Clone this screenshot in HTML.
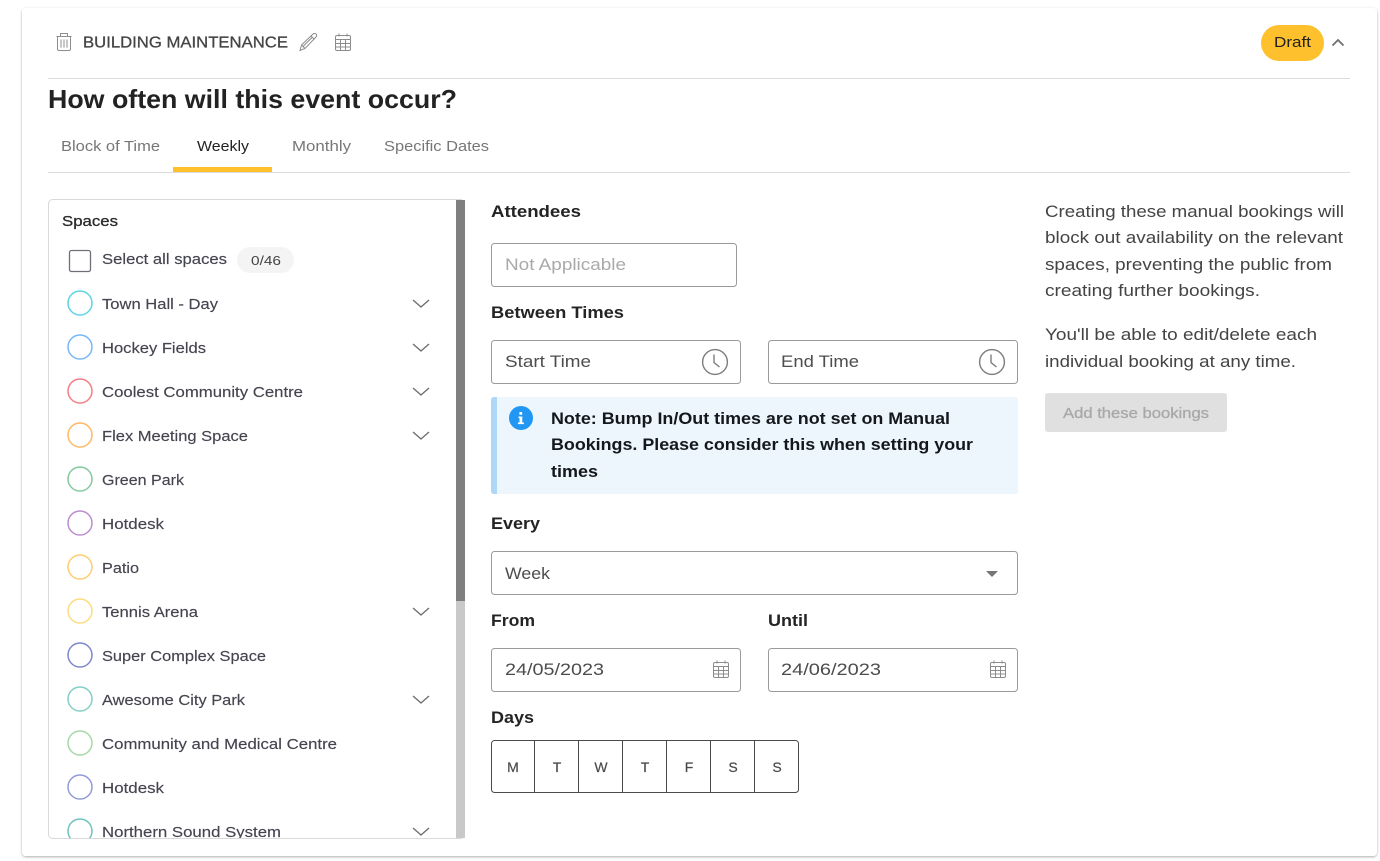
<!DOCTYPE html>
<html><head><meta charset="utf-8"><title>Building Maintenance</title>
<style>
html,body{margin:0;padding:0;width:1380px;height:861px;overflow:hidden;background:#fff}
svg{display:block;position:absolute;left:0;top:0}
text{font-family:"Liberation Sans",sans-serif;white-space:pre}
.m{stroke-width:.3px;paint-order:stroke}
.item{font-size:14.5px;fill:#454550;stroke:#454550;stroke-width:.15px}
.lab{font-size:16.8px;font-weight:700;fill:#242424}
.inp{font-size:17px;fill:#4d4d4d}
.body{font-size:16.5px;fill:#444}
.day{font-size:14px;fill:#4a4a4a;text-anchor:middle;stroke:#4a4a4a;stroke-width:.2px}
.tab{font-size:15px;fill:#777}
.box{fill:#fff;stroke:#9a9a9a;stroke-width:1}
.ic{fill:none;stroke:#8c8c8c;stroke-width:1}
.chev{fill:none;stroke:#6f6f6f;stroke-width:1.4}
.c{fill:none;stroke-width:1.5}
</style></head><body>
<svg width="1380" height="861" viewBox="0 0 1380 861" xmlns="http://www.w3.org/2000/svg">
<defs>
<filter id="s" x="-3%" y="-3%" width="106%" height="106%"><feDropShadow dx="0" dy="1" stdDeviation="1.2" flood-color="#000" flood-opacity=".32"/></filter>
<clipPath id="p"><rect x="49" y="200" width="416" height="638"/></clipPath>
<g id="cal" class="ic">
<rect x="0.5" y="2.5" width="15" height="15" rx="1.5"/><path d="M.5 6.5h15M.5 10.5h15M.5 14h15M5.5 6.5v11M10.5 6.5v11M4 .5v3M12 .5v3"/>
</g>
<g id="clk"><circle cx="0" cy="0" r="12.4" fill="none" stroke="#7d7d7d" stroke-width="1.4"/><path d="M-1-7.5V0.5L4.5 5" fill="none" stroke="#7d7d7d" stroke-width="1.4"/></g>
<path id="dn" d="M0 0L8 7L16 0" class="chev"/>
</defs>

<rect x="22" y="8" width="1355" height="848" rx="4" fill="#fff" filter="url(#s)"/>

<!-- header -->
<g class="ic">
<path d="M56.5 36.5h15M60.5 36V33.5h7V36M57.5 36.5V49a1.5 1.5 0 0 0 1.5 1.5h10a1.5 1.5 0 0 0 1.5-1.5V36.5M61 39.5v8M64 39.5v8M67 39.5v8"/>
<path d="M300 50.5L301.5 45L313 34a2 2 0 0 1 3 0a2 2 0 0 1 0 3L305 48.5ZM301.5 45L305 48.5M311 36L314.5 39.5M303 46.5L312.5 37"/>
</g>
<use href="#cal" x="335" y="33"/>
<text x="83" y="47.5" font-size="16" textLength="205" lengthAdjust="spacingAndGlyphs" fill="#444" stroke="#444" class="m">BUILDING MAINTENANCE</text>
<rect x="1261" y="25" width="63" height="36" rx="18" fill="#fec02d"/>
<text x="1274" y="47" font-size="14.5" textLength="37" lengthAdjust="spacingAndGlyphs" fill="#222">Draft</text>
<path d="M1332.5 45.5L1338 40L1343.5 45.5" fill="none" stroke="#6f6f6f" stroke-width="1.8"/>
<rect x="48" y="78" width="1302" height="1" fill="#dcdcdc"/>

<text x="48" y="108" font-size="26" font-weight="700" textLength="409" lengthAdjust="spacingAndGlyphs" fill="#222">How often will this event occur?</text>

<!-- tabs -->
<text class="tab" x="61" y="151" textLength="99" lengthAdjust="spacingAndGlyphs">Block of Time</text>
<text class="tab" x="197" y="151" textLength="52" lengthAdjust="spacingAndGlyphs" style="fill:#222">Weekly</text>
<text class="tab" x="292" y="151" textLength="59" lengthAdjust="spacingAndGlyphs">Monthly</text>
<text class="tab" x="384" y="151" textLength="105" lengthAdjust="spacingAndGlyphs">Specific Dates</text>
<rect x="48" y="172" width="1302" height="1" fill="#dcdcdc"/>
<rect x="173" y="167" width="99" height="5" fill="#fec02d"/>

<!-- spaces panel -->
<rect x="48.5" y="199.5" width="416" height="639" rx="4" fill="#fff" stroke="#d9d9d9"/>
<rect x="456" y="200" width="9" height="638" fill="#c9c9c9"/>
<rect x="456" y="200" width="9" height="401" fill="#7f7f7f"/>
<text x="62" y="226" font-size="15" textLength="56" lengthAdjust="spacingAndGlyphs" fill="#2a2a2a" stroke="#2a2a2a" class="m">Spaces</text>
<rect x="69.5" y="250.5" width="21" height="21" rx="2" fill="#fff" stroke="#6f6f7a" stroke-width="1.3"/>
<text class="item" x="102" y="264" textLength="125" lengthAdjust="spacingAndGlyphs">Select all spaces</text>
<rect x="237" y="247" width="57" height="26" rx="13" fill="#f4f4f4"/>
<text x="251" y="265" font-size="13" textLength="30" lengthAdjust="spacingAndGlyphs" fill="#444">0/46</text>

<g clip-path="url(#p)">
<circle class="c" cx="80" cy="303" r="12" stroke="#5ed4e4"/><text class="item" x="102" y="309" textLength="116" lengthAdjust="spacingAndGlyphs">Town Hall - Day</text><use href="#dn" x="413" y="300"/>
<circle class="c" cx="80" cy="347" r="12" stroke="#78b8f8"/><text class="item" x="102" y="353" textLength="104" lengthAdjust="spacingAndGlyphs">Hockey Fields</text><use href="#dn" x="413" y="344"/>
<circle class="c" cx="80" cy="391" r="12" stroke="#f57f85"/><text class="item" x="102" y="397" textLength="201" lengthAdjust="spacingAndGlyphs">Coolest Community Centre</text><use href="#dn" x="413" y="388"/>
<circle class="c" cx="80" cy="435" r="12" stroke="#ffb866"/><text class="item" x="102" y="441" textLength="146" lengthAdjust="spacingAndGlyphs">Flex Meeting Space</text><use href="#dn" x="413" y="432"/>
<circle class="c" cx="80" cy="479" r="12" stroke="#85c9a0"/><text class="item" x="102" y="485" textLength="82" lengthAdjust="spacingAndGlyphs">Green Park</text>
<circle class="c" cx="80" cy="523" r="12" stroke="#bb8ed0"/><text class="item" x="102" y="529" textLength="62" lengthAdjust="spacingAndGlyphs">Hotdesk</text>
<circle class="c" cx="80" cy="567" r="12" stroke="#ffcd73"/><text class="item" x="102" y="573" textLength="37" lengthAdjust="spacingAndGlyphs">Patio</text>
<circle class="c" cx="80" cy="611" r="12" stroke="#ffdb80"/><text class="item" x="102" y="617" textLength="96" lengthAdjust="spacingAndGlyphs">Tennis Arena</text><use href="#dn" x="413" y="608"/>
<circle class="c" cx="80" cy="655" r="12" stroke="#7f88cc"/><text class="item" x="102" y="661" textLength="164" lengthAdjust="spacingAndGlyphs">Super Complex Space</text>
<circle class="c" cx="80" cy="699" r="12" stroke="#84cfc6"/><text class="item" x="102" y="705" textLength="143" lengthAdjust="spacingAndGlyphs">Awesome City Park</text><use href="#dn" x="413" y="696"/>
<circle class="c" cx="80" cy="743" r="12" stroke="#a6d8a8"/><text class="item" x="102" y="749" textLength="235" lengthAdjust="spacingAndGlyphs">Community and Medical Centre</text>
<circle class="c" cx="80" cy="787" r="12" stroke="#939bd8"/><text class="item" x="102" y="793" textLength="62" lengthAdjust="spacingAndGlyphs">Hotdesk</text>
<circle class="c" cx="80" cy="831" r="12" stroke="#6fc4bc"/><text class="item" x="102" y="837" textLength="179" lengthAdjust="spacingAndGlyphs">Northern Sound System</text><use href="#dn" x="413" y="828"/>
</g>

<!-- attendees -->
<text class="lab" x="491" y="217" textLength="90" lengthAdjust="spacingAndGlyphs">Attendees</text>
<rect class="box" x="491.5" y="243.5" width="245" height="43" rx="3"/>
<text x="505" y="270" font-size="17" textLength="121" lengthAdjust="spacingAndGlyphs" fill="#a9a9a9">Not Applicable</text>

<!-- times -->
<text class="lab" x="491" y="318" textLength="133" lengthAdjust="spacingAndGlyphs">Between Times</text>
<rect class="box" x="491.5" y="340.5" width="249" height="43" rx="3"/>
<text class="inp" x="505" y="367" textLength="86" lengthAdjust="spacingAndGlyphs">Start Time</text>
<use href="#clk" x="715" y="362"/>
<rect class="box" x="768.5" y="340.5" width="249" height="43" rx="3"/>
<text class="inp" x="781" y="367" textLength="78" lengthAdjust="spacingAndGlyphs">End Time</text>
<use href="#clk" x="992" y="362"/>

<!-- alert -->
<rect x="491" y="397" width="527" height="97" rx="3" fill="#edf5fd"/>
<path d="M497 397v97h-3a3 3 0 0 1-3-3v-91a3 3 0 0 1 3-3z" fill="#aed8f9"/>
<circle cx="521" cy="418" r="12" fill="#2196f3"/>
<path d="M518.5 416.5h3.8v6h1.6v1.6h-6v-1.6h1.6v-4.4h-1zM519.4 412h2.8v2.8h-2.8z" fill="#fff"/>
<text x="551" y="424" font-size="16.8" font-weight="700" textLength="399" lengthAdjust="spacingAndGlyphs" fill="#14181d">Note: Bump In/Out times are not set on Manual</text>
<text x="551" y="450" font-size="16.8" font-weight="700" textLength="422" lengthAdjust="spacingAndGlyphs" fill="#14181d">Bookings. Please consider this when setting your</text>
<text x="551" y="477" font-size="16.8" font-weight="700" textLength="47" lengthAdjust="spacingAndGlyphs" fill="#14181d">times</text>

<!-- every -->
<text class="lab" x="491" y="529" textLength="49" lengthAdjust="spacingAndGlyphs">Every</text>
<rect class="box" x="491.5" y="551.5" width="526" height="43" rx="3"/>
<text class="inp" x="505" y="579" textLength="45" lengthAdjust="spacingAndGlyphs">Week</text>
<path d="M986 571h12l-6 6z" fill="#757575"/>

<!-- dates -->
<text class="lab" x="491" y="626" textLength="44" lengthAdjust="spacingAndGlyphs">From</text>
<text class="lab" x="768" y="626" textLength="40" lengthAdjust="spacingAndGlyphs">Until</text>
<rect class="box" x="491.5" y="648.5" width="249" height="43" rx="3"/>
<text class="inp" x="505" y="675" textLength="99" lengthAdjust="spacingAndGlyphs">24/05/2023</text>
<use href="#cal" x="713" y="660"/>
<rect class="box" x="768.5" y="648.5" width="249" height="43" rx="3"/>
<text class="inp" x="781" y="675" textLength="100" lengthAdjust="spacingAndGlyphs">24/06/2023</text>
<use href="#cal" x="990" y="660"/>

<!-- days -->
<text class="lab" x="491" y="723" textLength="43" lengthAdjust="spacingAndGlyphs">Days</text>
<rect x="491.5" y="740.5" width="307" height="52" rx="3" fill="#fff" stroke="#4a4a4a"/>
<path d="M534.5 741v51M578.5 741v51M622.5 741v51M666.5 741v51M710.5 741v51M754.5 741v51" stroke="#4a4a4a" fill="none"/>
<text class="day" x="513" y="772">M</text>
<text class="day" x="557" y="772">T</text>
<text class="day" x="601" y="772">W</text>
<text class="day" x="645" y="772">T</text>
<text class="day" x="689" y="772">F</text>
<text class="day" x="733" y="772">S</text>
<text class="day" x="777" y="772">S</text>

<!-- right column -->
<text class="body" x="1045" y="217" textLength="299" lengthAdjust="spacingAndGlyphs">Creating these manual bookings will</text>
<text class="body" x="1045" y="243" textLength="298" lengthAdjust="spacingAndGlyphs">block out availability on the relevant</text>
<text class="body" x="1045" y="270" textLength="287" lengthAdjust="spacingAndGlyphs">spaces, preventing the public from</text>
<text class="body" x="1045" y="296" textLength="215" lengthAdjust="spacingAndGlyphs">creating further bookings.</text>
<text class="body" x="1045" y="340" textLength="272" lengthAdjust="spacingAndGlyphs">You'll be able to edit/delete each</text>
<text class="body" x="1045" y="367" textLength="251" lengthAdjust="spacingAndGlyphs">individual booking at any time.</text>
<rect x="1045" y="393" width="182" height="39" rx="3" fill="#e0e0e0"/>
<text x="1063" y="418" font-size="14.5" textLength="146" lengthAdjust="spacingAndGlyphs" fill="#a8a8a8" stroke="#a8a8a8" class="m">Add these bookings</text>
</svg>
</body></html>
